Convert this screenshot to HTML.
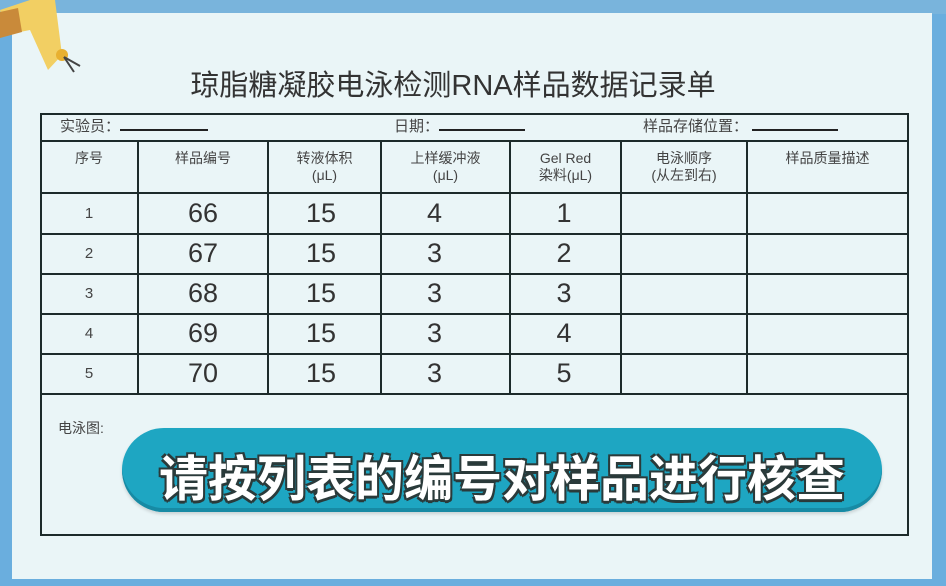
<!DOCTYPE html>
<html><head><meta charset="utf-8"><style>
*{margin:0;padding:0;box-sizing:border-box}
body{width:946px;height:586px;overflow:hidden;background:#6aaede;position:relative;font-family:"Liberation Sans","Noto Sans CJK SC",sans-serif;color:#333}
.card{position:absolute;left:12px;top:13px;width:920px;height:566px;background:#eaf5f7}
.h{position:absolute;height:2px;background:#1c2a2a}
.v{position:absolute;width:2px;background:#1c2a2a}
.t{position:absolute;text-align:center;white-space:nowrap}
.s{font-size:14px;color:#444;line-height:17px}
.n{font-size:27px;color:#333}
.idx{font-size:15px;color:#444}
</style></head><body>
<div style="position:absolute;left:0;top:0;width:946px;height:14px;background:#79b4dc"></div>
<div class="card"></div>
<svg style="position:absolute;left:0;top:0" width="90" height="80"><path d="M0 10 L30 0 L55 0 L62 55 L48 70 L30 30 L5 35 Z" fill="#f2cf63"/><path d="M0 12 L18 8 L22 32 L0 38Z" fill="#c98a3a"/><circle cx="62" cy="55" r="6" fill="#e8b030"/><path d="M64 57 L80 66 M64 57 L74 72" stroke="#444" stroke-width="2"/></svg>
<div class="t" style="left:0;width:906px;top:62px;font-size:29px;color:#333">琼脂糖凝胶电泳检测RNA样品数据记录单</div>
<div class="h" style="left:40px;width:869px;top:113px"></div>
<div class="h" style="left:40px;width:869px;top:140px"></div>
<div class="h" style="left:40px;width:869px;top:192px"></div>
<div class="h" style="left:40px;width:869px;top:233px"></div>
<div class="h" style="left:40px;width:869px;top:273px"></div>
<div class="h" style="left:40px;width:869px;top:313px"></div>
<div class="h" style="left:40px;width:869px;top:353px"></div>
<div class="h" style="left:40px;width:869px;top:393px"></div>
<div class="h" style="left:40px;width:869px;top:534px"></div>
<div class="v" style="left:40px;top:113px;height:423px"></div>
<div class="v" style="left:907px;top:113px;height:423px"></div>
<div class="v" style="left:137px;top:140px;height:255px"></div>
<div class="v" style="left:267px;top:140px;height:255px"></div>
<div class="v" style="left:380px;top:140px;height:255px"></div>
<div class="v" style="left:509px;top:140px;height:255px"></div>
<div class="v" style="left:620px;top:140px;height:255px"></div>
<div class="v" style="left:746px;top:140px;height:255px"></div>
<div class="t s" style="left:60px;top:118px;font-size:15px">实验员：<span style="display:inline-block;width:88px;border-bottom:2px solid #222"></span></div>
<div class="t s" style="left:394px;top:118px;font-size:15px">日期：<span style="display:inline-block;width:86px;border-bottom:2px solid #222"></span></div>
<div class="t s" style="left:643px;top:118px;font-size:15px">样品存储位置：&nbsp;<span style="display:inline-block;width:86px;border-bottom:2px solid #222"></span></div>
<div class="t s" style="left:40px;width:98px;top:150px">序号</div>
<div class="t s" style="left:138px;width:130px;top:150px">样品编号</div>
<div class="t s" style="left:268px;width:113px;top:150px">转液体积<br>(μL)</div>
<div class="t s" style="left:381px;width:129px;top:150px">上样缓冲液<br>(μL)</div>
<div class="t s" style="left:510px;width:111px;top:150px">Gel Red<br>染料(μL)</div>
<div class="t s" style="left:621px;width:126px;top:150px">电泳顺序<br>(从左到右)</div>
<div class="t s" style="left:747px;width:161px;top:150px">样品质量描述</div>
<div class="t idx" style="left:40px;width:98px;top:205px">1</div>
<div class="t idx" style="left:40px;width:98px;top:245px">2</div>
<div class="t idx" style="left:40px;width:98px;top:285px">3</div>
<div class="t idx" style="left:40px;width:98px;top:325px">4</div>
<div class="t idx" style="left:40px;width:98px;top:365px">5</div>
<div class="t n" style="left:138px;width:130px;top:198px">66</div>
<div class="t n" style="left:138px;width:130px;top:238px">67</div>
<div class="t n" style="left:138px;width:130px;top:278px">68</div>
<div class="t n" style="left:138px;width:130px;top:318px">69</div>
<div class="t n" style="left:138px;width:130px;top:358px">70</div>
<div class="t n" style="left:268px;width:106px;top:198px">15</div>
<div class="t n" style="left:268px;width:106px;top:238px">15</div>
<div class="t n" style="left:268px;width:106px;top:278px">15</div>
<div class="t n" style="left:268px;width:106px;top:318px">15</div>
<div class="t n" style="left:268px;width:106px;top:358px">15</div>
<div class="t n" style="left:381px;width:107px;top:198px">4</div>
<div class="t n" style="left:381px;width:107px;top:238px">3</div>
<div class="t n" style="left:381px;width:107px;top:278px">3</div>
<div class="t n" style="left:381px;width:107px;top:318px">3</div>
<div class="t n" style="left:381px;width:107px;top:358px">3</div>
<div class="t n" style="left:510px;width:108px;top:198px">1</div>
<div class="t n" style="left:510px;width:108px;top:238px">2</div>
<div class="t n" style="left:510px;width:108px;top:278px">3</div>
<div class="t n" style="left:510px;width:108px;top:318px">4</div>
<div class="t n" style="left:510px;width:108px;top:358px">5</div>
<div class="t s" style="left:58px;top:420px;font-size:14px">电泳图:</div>
<div style="position:absolute;left:122px;top:428px;width:760px;height:84px;border-radius:42px;background:#1ea6c2;box-shadow:inset 0 -4px 0 #178aa4, 0 2px 3px rgba(0,0,0,.15)"></div>
<div class="t" style="left:122px;width:760px;top:440px;font-size:49px;font-weight:bold;color:#fff;letter-spacing:0px;text-shadow:-2px -2px 0 #2a3a3a,2px -2px 0 #2a3a3a,-2px 2px 0 #2a3a3a,2px 2px 0 #2a3a3a,0 3px 0 #2a3a3a">请按列表的编号对样品进行核查</div>
</body></html>
